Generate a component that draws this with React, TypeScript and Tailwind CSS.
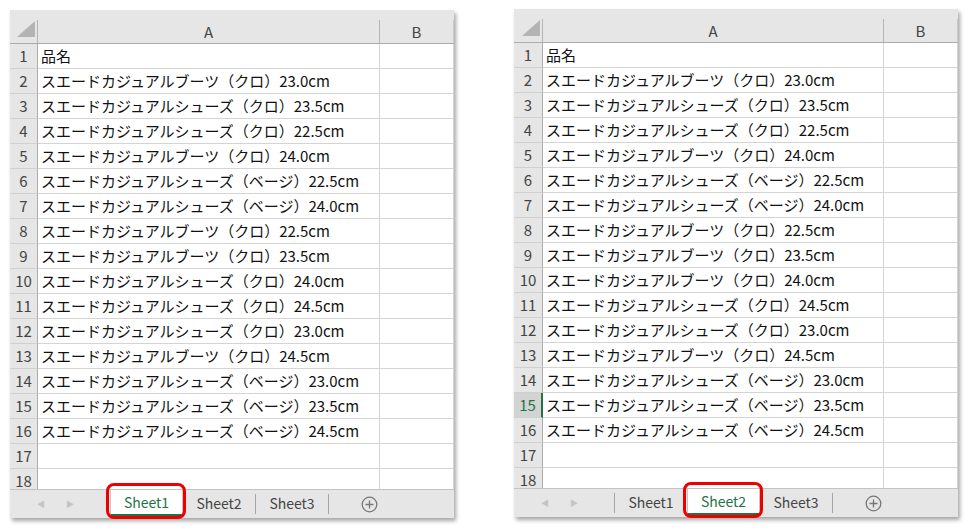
import React from "react";

const base = [
  "品名",
  "スエードカジュアルブーツ（クロ）23.0cm",
  "スエードカジュアルシューズ（クロ）23.5cm",
  "スエードカジュアルシューズ（クロ）22.5cm",
  "スエードカジュアルブーツ（クロ）24.0cm",
  "スエードカジュアルシューズ（ベージ）22.5cm",
  "スエードカジュアルシューズ（ベージ）24.0cm",
  "スエードカジュアルブーツ（クロ）22.5cm",
  "スエードカジュアルブーツ（クロ）23.5cm",
  "スエードカジュアルシューズ（クロ）24.0cm",
  "スエードカジュアルシューズ（クロ）24.5cm",
  "スエードカジュアルシューズ（クロ）23.0cm",
  "スエードカジュアルブーツ（クロ）24.5cm",
  "スエードカジュアルシューズ（ベージ）23.0cm",
  "スエードカジュアルシューズ（ベージ）23.5cm",
  "スエードカジュアルシューズ（ベージ）24.5cm",
  "",
  "",
];

// sheet2 differs only in row 10
const sheet2 = base.map((t, i) => (i === 9 ? "スエードカジュアルブーツ（クロ）24.0cm" : t));

function Sep() {
  return <div className="w-px h-[20px] bg-[#a6a6a6] self-center" />;
}

function PlusIcon() {
  return (
    <svg width="17" height="17" viewBox="0 0 17 17" fill="none" stroke="#777" strokeWidth="1.3">
      <circle cx="8.5" cy="8.5" r="7.3" />
      <path d="M8.5 4.5v8M4.5 8.5h8" />
    </svg>
  );
}

function TabBar({ active }: { active: number }) {
  const names = ["Sheet1", "Sheet2", "Sheet3"];
  const items: React.ReactNode[] = [];
  names.forEach((n, i) => {
    const isActive = i + 1 === active;
    const prevActive = i === active; // previous tab (index i-1) is the active one
    if (!isActive && !prevActive) items.push(<Sep key={"s" + i} />);
    if (isActive) {
      items.push(
        <div key={n} className="relative w-[73px] h-[26px] self-start bg-white border-x border-[#c6c6c6] flex items-center justify-center text-[#217346] text-[14px]">
          <span className="pb-[2px]">{n}</span>
          <div className="absolute left-0 right-0 bottom-0 h-[2px] bg-[#217346]" />
          <div className="absolute -left-[5px] -right-[4px] -top-[7px] -bottom-[3px] border-[3px] border-[#ee0000] rounded-[8px]" />
        </div>
      );
    } else {
      items.push(
        <div key={n} className="w-[72px] h-full flex items-center justify-center text-[#444] text-[14px]">
          <span className="pb-[2px]">{n}</span>
        </div>
      );
    }
  });
  if (active !== names.length) items.push(<Sep key="end" />);
  return (
    <div className="h-[29px] bg-[#e6e6e6] border-t border-[#c3c3c3] flex items-stretch">
      <div className="w-[100px] flex items-center pl-[27px] gap-[21px] text-[#c4c4c4] text-[8px]">
        <span>◀</span>
        <span>▶</span>
      </div>
      {items}
      <div className="ml-[32px] flex items-center">
        <PlusIcon />
      </div>
    </div>
  );
}

function Panel({
  rows,
  active,
  highlight,
  hw,
  aw,
  top,
}: {
  rows: string[];
  active: number;
  highlight?: number;
  hw: string;
  aw: string;
  top: string;
}) {
  return (
    <div className={`w-[444px] h-[508px] flex flex-col bg-white shadow-[2px_3px_4px_rgba(0,0,0,0.35)] ${top}`}>
      <div className="bg-[#e6e6e6] pt-[10px] flex border-b border-[#ababab]">
        <div className={`${hw} h-[23px] border-r border-[#b4b4b4] flex items-end justify-end pr-[2px] pb-[6px]`}>
          <svg width="18" height="16" viewBox="0 0 18 16">
            <polygon points="18,0 18,16 0,16" fill="#b4b4b4" />
          </svg>
        </div>
        <div className={`${aw} h-[23px] border-r border-[#b4b4b4] flex items-center justify-center text-[15px] text-[#444]`}>A</div>
        <div className="flex-1 h-[23px] border-r border-[#c8c8c8] flex items-center justify-center text-[15px] text-[#444]">B</div>
      </div>
      <div className="h-[445px] overflow-hidden">
        {rows.map((t, i) => {
          const hl = highlight === i + 1;
          return (
            <div key={i} className="flex h-[25px]">
              <div
                className={`${hw} shrink-0 border-b border-[#d0d0d0] flex items-center justify-center pb-[2px] text-[15px] ${
                  hl ? "bg-[#d3d3d3] text-[#217346] border-r-2 border-r-[#217346]" : "bg-[#e6e6e6] text-[#444] border-r border-r-[#ababab]"
                }`}
              >
                {i + 1}
              </div>
              <div className={`${aw} shrink-0 border-b border-r border-[#d4d4d4] flex items-center pl-[3px] pb-[2px] text-[15px] text-[#111] whitespace-nowrap overflow-hidden`}>
                {t}
              </div>
              <div className="flex-1 border-b border-r border-[#d4d4d4]" />
            </div>
          );
        })}
      </div>
      <TabBar active={active} />
    </div>
  );
}

export default function App() {
  return (
    <div
      className="w-[973px] h-[532px] bg-white flex items-start pl-[10px] gap-[60px] leading-none"
      style={{ fontFamily: '"Noto Sans CJK JP", "Noto Sans", sans-serif' }}
    >
      <Panel rows={base} active={1} hw="w-[28px]" aw="w-[342px]" top="mt-[10px]" />
      <Panel rows={sheet2} active={2} highlight={15} hw="w-[29px]" aw="w-[341px]" top="mt-[9px]" />
    </div>
  );
}
